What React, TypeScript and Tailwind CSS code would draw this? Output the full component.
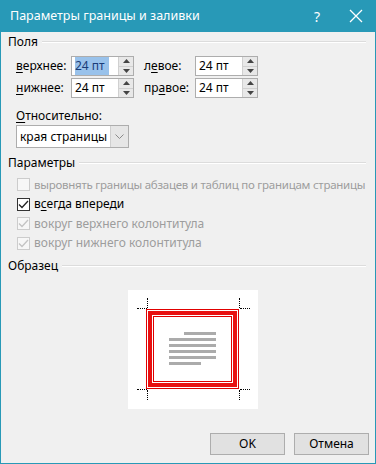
import React from "react";

const font = { fontFamily: '"Noto Sans", "Open Sans", sans-serif' };

const U = ({ children }: { children: React.ReactNode }) => (
  <span className="underline underline-offset-2 decoration-1">{children}</span>
);

const GroupHeader = ({ title }: { title: string }) => (
  <div className="flex items-center h-[20px] pl-[7px] pr-[9px] text-[12px] text-black">
    <span>{title}</span>
    <div className="flex-1 ml-[4px] border-t border-b border-t-[#dcdcdc] border-b-white" />
  </div>
);

const Spin = ({ value, selected }: { value: string; selected?: boolean }) => (
  <div className="flex h-[20px] w-[63px] border border-[#adadad] bg-white">
    <div className="flex-1 flex items-center pl-[3px] text-[12px] text-black">
      <span className={selected ? "bg-[#99c2eb] text-[#1a3c78] pr-[4px]" : ""}>{value}</span>
    </div>
    <div className="w-[15px] flex flex-col border-l border-[#d0d0d0] bg-[#e8e8e8]">
      <div className="flex-1 flex items-center justify-center border-b border-[#d0d0d0]">
        <svg width="7" height="4" viewBox="0 0 7 4">
          <path d="M0 4 L3.5 0 L7 4 Z" fill="#444" />
        </svg>
      </div>
      <div className="flex-1 flex items-center justify-center">
        <svg width="7" height="4" viewBox="0 0 7 4">
          <path d="M0 0 L3.5 4 L7 0 Z" fill="#444" />
        </svg>
      </div>
    </div>
  </div>
);

const Check = ({
  checked,
  disabled,
  children,
}: {
  checked?: boolean;
  disabled?: boolean;
  children: React.ReactNode;
}) => (
  <div className="flex items-center h-[19.5px] pl-[16px] text-[12px] whitespace-nowrap">
    <div
      className={`w-[13px] h-[13px] shrink-0 border flex items-center justify-center ${
        disabled ? "border-[#cccccc] bg-[#f7f7f7]" : "border-[#333333] bg-white"
      }`}
    >
      {checked && (
        <svg width="11" height="9" viewBox="0 0 11 9">
          <path
            d="M1 4.5 L4 7.5 L10 1"
            fill="none"
            stroke={disabled ? "#c4c4c4" : "#222"}
            strokeWidth="1.3"
          />
        </svg>
      )}
    </div>
    <span className={`ml-[4px] ${disabled ? "text-[#9d9d9d]" : "text-black"}`}>{children}</span>
  </div>
);

const Corner = ({ pos }: { pos: string }) => {
  const h = "absolute w-[10px] border-t border-dotted border-black";
  const v = "absolute h-[10px] border-l border-dotted border-black";
  if (pos === "tl")
    return (
      <>
        <div className={`${h} left-[9px] top-[18px]`} />
        <div className={`${v} left-[19px] top-[8px]`} />
      </>
    );
  if (pos === "tr")
    return (
      <>
        <div className={`${h} right-[8px] top-[18px]`} />
        <div className={`${v} right-[18px] top-[8px]`} />
      </>
    );
  if (pos === "bl")
    return (
      <>
        <div className={`${h} left-[9px] bottom-[19px]`} />
        <div className={`${v} left-[19px] bottom-[9px]`} />
      </>
    );
  return (
    <>
      <div className={`${h} right-[8px] bottom-[19px]`} />
      <div className={`${v} right-[18px] bottom-[9px]`} />
    </>
  );
};

export default function App() {
  return (
    <div style={font} className="w-[376px] h-[464px] flex flex-col bg-[#2899b7]">
      {/* Title bar */}
      <div className="h-[32px] flex items-center text-white shrink-0">
        <span className="pl-[10px] text-[12.5px] flex-1">Параметры границы и заливки</span>
        <span className="w-[20px] text-center text-[14px] mr-[22px]">?</span>
        <svg width="14" height="14" viewBox="0 0 14 14" className="mr-[13px]">
          <path d="M1 1 L13 13 M13 1 L1 13" stroke="white" strokeWidth="1.3" />
        </svg>
      </div>

      <div className="flex-1 mx-[1px] mb-[1px] bg-[#f0f0f0] flex flex-col">
        <GroupHeader title="Поля" />

        {/* margin inputs */}
        <div className="mt-[4px] flex flex-col gap-[2px] text-[12px] text-black">
          <div className="flex items-center">
            <span className="w-[55px] ml-[15px]">
              <U>в</U>ерхнее:
            </span>
            <Spin value="24 пт" selected />
            <span className="w-[51px] ml-[10px]">
              л<U>е</U>вое:
            </span>
            <Spin value="24 пт" />
          </div>
          <div className="flex items-center">
            <span className="w-[55px] ml-[15px]">
              <U>н</U>ижнее:
            </span>
            <Spin value="24 пт" />
            <span className="w-[51px] ml-[10px]">
              пр<U>а</U>вое:
            </span>
            <Spin value="24 пт" />
          </div>
        </div>

        <div className="mt-[10px] ml-[15px] h-[16px] flex items-center text-[12px] text-black">
          <span>
            <U>О</U>тносительно:
          </span>
        </div>
        <div className="mt-[1px] ml-[15px] w-[113px] h-[23px] flex border border-[#adadad] bg-white">
          <div className="flex-1 flex items-center pl-[3px] text-[12px] text-black">края страницы</div>
          <div className="w-[18px] bg-[#e6e6e6] border-l border-[#cfcfcf] flex items-center justify-center">
            <svg width="9" height="5" viewBox="0 0 9 5">
              <path d="M0.5 0.5 L4.5 4.5 L8.5 0.5" fill="none" stroke="#8a8a8a" strokeWidth="1" />
            </svg>
          </div>
        </div>

        <div className="mt-[5px]">
          <GroupHeader title="Параметры" />
        </div>
        <div className="mt-[2px] flex flex-col">
          <Check disabled>
            <span className="text-[11.5px] tracking-[-0.25px]">
              выровнять границы абзацев и таблиц по границам страницы
            </span>
          </Check>
          <Check checked>
            в<U>с</U>егда впереди
          </Check>
          <Check checked disabled>
            вокруг верхнего колонтитула
          </Check>
          <Check checked disabled>
            вокруг нижнего колонтитула
          </Check>
        </div>

        <div className="mt-[3px]">
          <GroupHeader title="Образец" />
        </div>

        {/* Preview */}
        <div className="mt-[14px] flex justify-center">
          <div className="relative w-[130px] h-[119px] bg-white ml-[9px] flex items-start justify-center pt-[19px]">
            <Corner pos="tl" />
            <Corner pos="tr" />
            <Corner pos="bl" />
            <Corner pos="br" />
            <div className="w-[93px] h-[80px] border border-[#e00000] p-[1px] bg-white -ml-[1px]">
              <div className="w-full h-full border-[4px] border-[#e81010] p-[1px] bg-white">
                <div className="w-full h-full border border-[#e00000] flex flex-col items-center justify-center">
                  <div className="w-[47px] flex flex-col items-end gap-[3px] mb-[2px]">
                    <div className="w-[32px] h-[3px] bg-[#ababab]" />
                    <div className="w-[47px] h-[3px] bg-[#ababab]" />
                    <div className="w-[47px] h-[3px] bg-[#ababab]" />
                    <div className="w-[47px] h-[3px] bg-[#ababab]" />
                    <div className="w-[47px] h-[3px] bg-[#ababab]" />
                    <div className="w-[32px] h-[3px] bg-[#ababab] self-start" />
                  </div>
                </div>
              </div>
            </div>
          </div>
        </div>

        {/* Buttons */}
        <div className="mt-auto mb-[8px] flex justify-end gap-[9px] pr-[6px] text-[12px] text-black">
          <button className="w-[75px] h-[22px] bg-[#e1e1e1] border border-[#adadad]">OK</button>
          <button className="w-[75px] h-[22px] bg-[#e1e1e1] border border-[#adadad]">Отмена</button>
        </div>
      </div>
    </div>
  );
}
